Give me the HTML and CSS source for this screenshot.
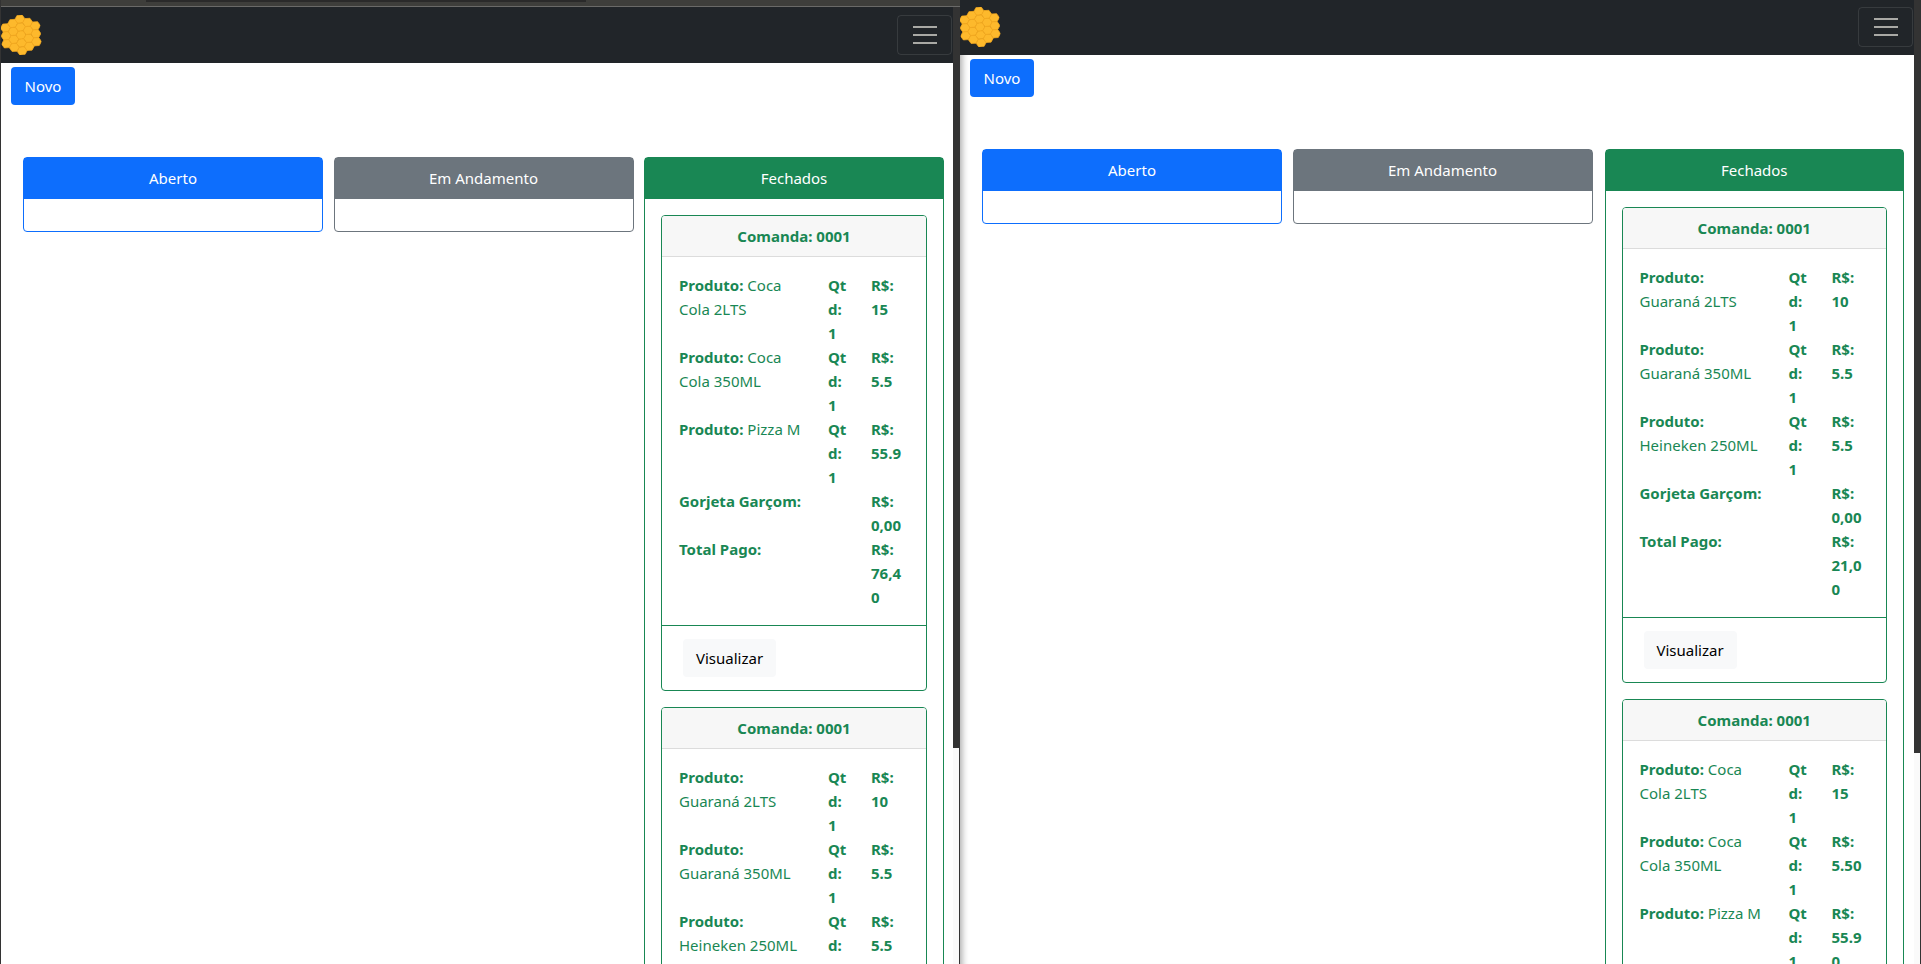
FILE: index.html
```html
<!DOCTYPE html>
<html lang="pt-BR">
<head>
  <meta charset="UTF-8" />
  <meta name="viewport" content="width=device-width, initial-scale=1.0"/>
  <title>Comandas</title>
  <link rel="stylesheet" href="styles.css">
</head>
<body>
  <svg class="defs" width="0" height="0" aria-hidden="true">
    <defs>
      <polygon id="cell" points="4.7,0 2.35,4.07 -2.35,4.07 -4.7,0 -2.35,-4.07 2.35,-4.07" />
      <g id="honeycomb" fill="#fdb92c" stroke="#f5a91f" stroke-width="0.7">
        <use href="#cell" x="6" y="11" /><use href="#cell" x="6" y="19.2" /><use href="#cell" x="6" y="27.4" />
        <use href="#cell" x="13" y="7" /><use href="#cell" x="13" y="15.2" /><use href="#cell" x="13" y="23.4" /><use href="#cell" x="13" y="31.6" />
        <use href="#cell" x="20" y="3" /><use href="#cell" x="20" y="11.2" /><use href="#cell" x="20" y="19.4" /><use href="#cell" x="20" y="27.6" /><use href="#cell" x="20" y="35.8" />
        <use href="#cell" x="27" y="7" /><use href="#cell" x="27" y="15.2" /><use href="#cell" x="27" y="23.4" /><use href="#cell" x="27" y="31.6" />
        <use href="#cell" x="34" y="11" /><use href="#cell" x="34" y="19.2" /><use href="#cell" x="34" y="27.4" />
      </g>
    </defs>
  </svg>

  <div class="desktop">

    <!-- janela da esquerda -->
    <section class="pane pane-left">
      <div class="titlebar"><div class="tab-edge"></div></div>
      <div class="pane-row">
        <div class="window">
          <nav class="navbar">
            <svg class="logo" viewBox="1.3 -1.1 37.4 41" preserveAspectRatio="none"><use href="#honeycomb" /></svg>
            <button class="toggler" type="button" aria-label="Menu">
              <svg width="24" height="20" viewBox="0 0 24 20"><path d="M0 2h24M0 10h24M0 18h24" /></svg>
            </button>
          </nav>
          <button class="btn btn-novo" type="button">Novo</button>
          <div class="board">
            <div class="card card-blue"><div class="card-title">Aberto</div><div class="card-content"></div></div>
            <div class="card card-gray"><div class="card-title">Em Andamento</div><div class="card-content"></div></div>
            <div class="card card-green">
              <div class="card-title">Fechados</div>
              <div class="card-content">
                <div class="order">
                  <div class="order-head">Comanda: 0001</div>
                  <div class="order-body">
                    <div><b>Produto:</b> Coca<br>Cola 2LTS</div><div><b>Qt<br>d:<br>1</b></div><div><b>R$:<br>15</b></div>
                    <div><b>Produto:</b> Coca<br>Cola 350ML</div><div><b>Qt<br>d:<br>1</b></div><div><b>R$:<br>5.5</b></div>
                    <div><b>Produto:</b> Pizza M</div><div><b>Qt<br>d:<br>1</b></div><div><b>R$:<br>55.9</b></div>
                    <div class="wide"><b>Gorjeta Garçom:</b></div><div><b>R$:<br>0,00</b></div>
                    <div class="wide"><b>Total Pago:</b></div><div><b>R$:<br>76,4<br>0</b></div>
                  </div>
                  <div class="order-foot"><button class="btn btn-light" type="button">Visualizar</button></div>
                </div>
                <div class="order">
                  <div class="order-head">Comanda: 0001</div>
                  <div class="order-body">
                    <div><b>Produto:</b><br>Guaraná 2LTS</div><div><b>Qt<br>d:<br>1</b></div><div><b>R$:<br>10</b></div>
                    <div><b>Produto:</b><br>Guaraná 350ML</div><div><b>Qt<br>d:<br>1</b></div><div><b>R$:<br>5.5</b></div>
                    <div><b>Produto:</b><br>Heineken 250ML</div><div><b>Qt<br>d:<br>1</b></div><div><b>R$:<br>5.5</b></div>
                  </div>
                </div>
              </div>
            </div>
          </div>
        </div>
        <div class="gutter"><div class="thumb thumb-left"></div></div>
      </div>
    </section>

    <!-- janela da direita -->
    <section class="pane pane-right">
      <div class="pane-row">
        <div class="window">
          <nav class="navbar">
            <svg class="logo" viewBox="1.3 -1.1 37.4 41" preserveAspectRatio="none"><use href="#honeycomb" /></svg>
            <button class="toggler" type="button" aria-label="Menu">
              <svg width="24" height="20" viewBox="0 0 24 20"><path d="M0 2h24M0 10h24M0 18h24" /></svg>
            </button>
          </nav>
          <button class="btn btn-novo" type="button">Novo</button>
          <div class="board">
            <div class="card card-blue"><div class="card-title">Aberto</div><div class="card-content"></div></div>
            <div class="card card-gray"><div class="card-title">Em Andamento</div><div class="card-content"></div></div>
            <div class="card card-green">
              <div class="card-title">Fechados</div>
              <div class="card-content">
                <div class="order">
                  <div class="order-head">Comanda: 0001</div>
                  <div class="order-body">
                    <div><b>Produto:</b><br>Guaraná 2LTS</div><div><b>Qt<br>d:<br>1</b></div><div><b>R$:<br>10</b></div>
                    <div><b>Produto:</b><br>Guaraná 350ML</div><div><b>Qt<br>d:<br>1</b></div><div><b>R$:<br>5.5</b></div>
                    <div><b>Produto:</b><br>Heineken 250ML</div><div><b>Qt<br>d:<br>1</b></div><div><b>R$:<br>5.5</b></div>
                    <div class="wide"><b>Gorjeta Garçom:</b></div><div><b>R$:<br>0,00</b></div>
                    <div class="wide"><b>Total Pago:</b></div><div><b>R$:<br>21,0<br>0</b></div>
                  </div>
                  <div class="order-foot"><button class="btn btn-light" type="button">Visualizar</button></div>
                </div>
                <div class="order">
                  <div class="order-head">Comanda: 0001</div>
                  <div class="order-body">
                    <div><b>Produto:</b> Coca<br>Cola 2LTS</div><div><b>Qt<br>d:<br>1</b></div><div><b>R$:<br>15</b></div>
                    <div><b>Produto:</b> Coca<br>Cola 350ML</div><div><b>Qt<br>d:<br>1</b></div><div><b>R$:<br>5.50</b></div>
                    <div><b>Produto:</b> Pizza M</div><div><b>Qt<br>d:<br>1</b></div><div><b>R$:<br>55.9<br>0</b></div>
                  </div>
                </div>
              </div>
            </div>
          </div>
        </div>
        <div class="gutter"><div class="thumb thumb-right"></div></div>
      </div>
    </section>

  </div>
</body>
</html>
```

FILE: styles.css
```css
* {
  box-sizing: border-box;
}
html, body {
  margin: 0;
  padding: 0;
  height: 964px;
  overflow: hidden;
  background: #fff;
}
body {
  font-family: "Noto Sans", "Open Sans", sans-serif;
  font-size: 15px;
  line-height: 24px;
  color: #212529;
}
.defs {
  display: block;
  height: 0;
}
.desktop {
  display: flex;
  width: 1921px;
  height: 964px;
  overflow: hidden;
}

/* panes */
.pane {
  display: flex;
  flex-direction: column;
  height: 964px;
  overflow: hidden;
}
.pane-left {
  width: 960px;
  border-left: 1px solid #333;
}
.pane-right {
  width: 961px;
}
.pane-right .navbar {
  margin-top: -1px;
}
.pane-right .window {
  box-shadow: inset 9px 0 7px -7px rgba(0, 0, 0, 0.35);
}
.pane-right .card-green {
  margin: 0 -1px 0 1.5px;
}
.titlebar {
  flex: none;
  height: 7px;
  background: #3e3e3b;
  border-bottom: 1px solid #6a6a68;
  padding-left: 145px;
}
.tab-edge {
  width: 440px;
  height: 2px;
  background: #2a2a2a;
}
.pane-row {
  display: flex;
  flex: 1;
  min-height: 0;
}
.window {
  flex: 1;
  min-width: 0;
  background: #fff;
}
.gutter {
  flex: none;
  width: 7px;
  background: #fafafa;
  border-right: 1px solid #333;
}
.thumb {
  background: #333;
}
.thumb-left {
  height: 741px;
}
.thumb-right {
  height: 753px;
}

/* navbar */
.navbar {
  display: flex;
  justify-content: space-between;
  align-items: center;
  height: 56px;
  background: #212529;
}
.logo {
  display: block;
  width: 40px;
  height: 40px;
  transform: rotate(-4deg);
}
.toggler {
  display: flex;
  align-items: center;
  justify-content: center;
  width: 55px;
  height: 40px;
  margin-right: 1px;
  padding: 0;
  background: transparent;
  border: 1px solid rgba(255, 255, 255, 0.1);
  border-radius: 4px;
}
.toggler path {
  fill: none;
  stroke: #a9a9a5;
  stroke-width: 2;
}

/* buttons */
.btn {
  display: block;
  height: 38px;
  padding: 0 12px;
  font: inherit;
  border: 1px solid transparent;
  border-radius: 4px;
}
.btn-novo {
  width: 64px;
  margin: 4px 0 0 10px;
  color: #fff;
  background: #0d6efd;
}
.btn-light {
  width: 93px;
  margin: 5px;
  color: #000;
  background: #f8f9fa;
}

/* columns */
.board {
  display: grid;
  grid-template-columns: 300px 300px 300px;
  column-gap: 10.5px;
  align-items: start;
  margin: 52px 0 0 22px;
}
.card {
  border: 1px solid;
  border-radius: 4px;
  background: #fff;
}
.card-title {
  height: 41px;
  padding: 8px 16px;
  color: #fff;
  text-align: center;
}
.card-content {
  padding: 16px;
}
.card-blue {
  border-color: #0d6efd;
}
.card-blue .card-title {
  background: #0d6efd;
}
.card-gray {
  border-color: #6c757d;
}
.card-gray .card-title {
  background: #6c757d;
}
.card-green {
  border-color: #198754;
}
.card-green .card-title {
  background: #198754;
}

/* comandas */
.order {
  margin-bottom: 16px;
  color: #198754;
  border: 1px solid #198754;
  border-radius: 4px;
}
.order-head {
  height: 41px;
  padding: 8px 16px;
  font-weight: 700;
  text-align: center;
  background: #f7f7f7;
  border-bottom: 1px solid #dcdcdc;
  border-radius: 3px 3px 0 0;
}
.order-body {
  display: grid;
  grid-template-columns: 149px 43px 1fr;
  padding: 16px 0 16px 17px;
}
.wide {
  grid-column: span 2;
}
.order-foot {
  padding: 8px 16px;
  border-top: 1px solid #198754;
}
```
